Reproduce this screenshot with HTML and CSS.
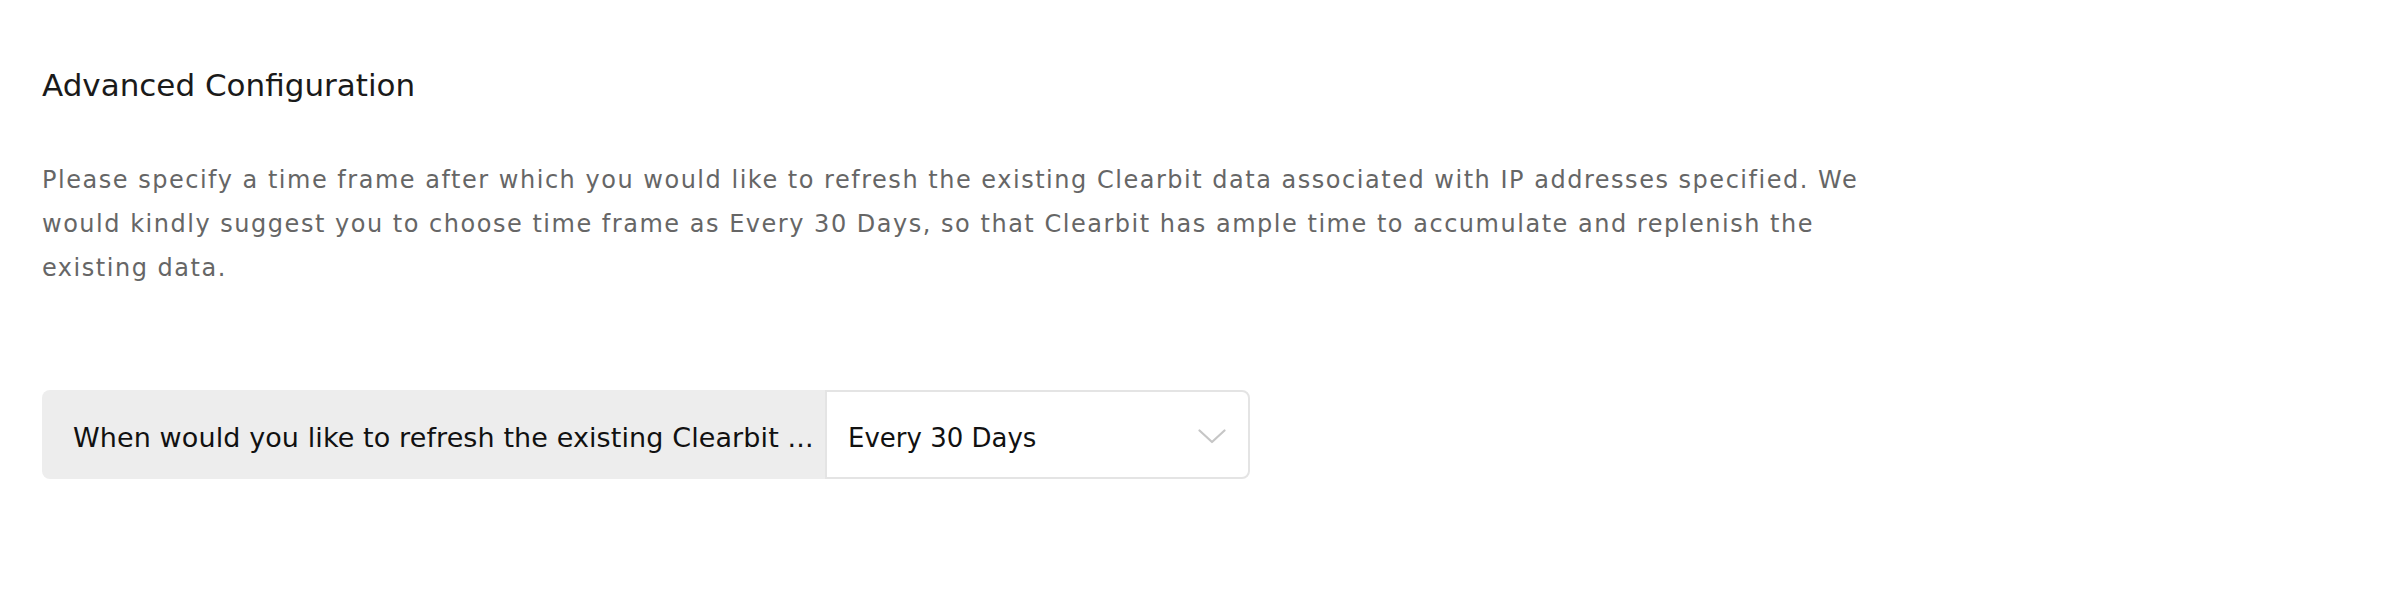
FILE: index.html
```html
<!DOCTYPE html>
<html lang="en">
<head>
<meta charset="utf-8">
<title>Advanced Configuration</title>
<link rel="stylesheet" href="styles.css">
</head>
<body>
<div class="page">
  <h1 class="title">Advanced Configuration</h1>
  <p class="desc">Please specify a time frame after which you would like to refresh the existing Clearbit data associated with IP addresses specified. We would kindly suggest you to choose time frame as Every 30 Days, so that Clearbit has ample time to accumulate and replenish the existing data.</p>
  <div class="field">
    <div class="field-label">When would you like to refresh the existing Clearbit ...</div>
    <div class="select">
      <span class="select-value">Every 30 Days</span>
      <svg class="chevron" width="28" height="15" viewBox="0 0 28 15" aria-hidden="true"><polyline points="1.5,1.5 14,13 26.5,1.5" fill="none" stroke="#c6c6c6" stroke-width="2.2" stroke-linecap="round" stroke-linejoin="round"/></svg>
    </div>
  </div>
</div>
</body>
</html>
```

FILE: styles.css
```css
html, body {
  margin: 0;
  padding: 0;
  background: #ffffff;
}
body {
  font-family: "DejaVu Sans", "Noto Sans", sans-serif;
}
.page {
  padding: 65px 42px 40px;
}
.title {
  margin: 0;
  font-size: 31px;
  line-height: 40px;
  font-weight: normal;
  color: #1a1a1a;
}
.desc {
  margin: 53px 0 0;
  max-width: 1840px;
  font-size: 24px;
  letter-spacing: 1.52px;
  line-height: 44px;
  color: #666666;
}
.field {
  margin-top: 100px;
  display: flex;
  width: 1208px;
  height: 89px;
}
.field-label {
  width: 783px;
  flex: none;
  box-sizing: border-box;
  background: #ededed;
  border-radius: 8px 0 0 8px;
  padding: 6px 0 0 31px;
  display: flex;
  align-items: center;
  font-size: 27px;
  letter-spacing: 0.1px;
  color: #111111;
  white-space: nowrap;
  overflow: hidden;
}
.select {
  flex: 1;
  box-sizing: border-box;
  border: 2px solid #e4e4e4;
  border-radius: 0 8px 8px 0;
  display: flex;
  align-items: center;
  justify-content: space-between;
  padding: 6px 22px 0 21px;
  background: #ffffff;
}
.select-value {
  font-size: 26px;
  color: #111111;
}
.chevron {
  display: block;
  margin-bottom: 2px;
}
```
